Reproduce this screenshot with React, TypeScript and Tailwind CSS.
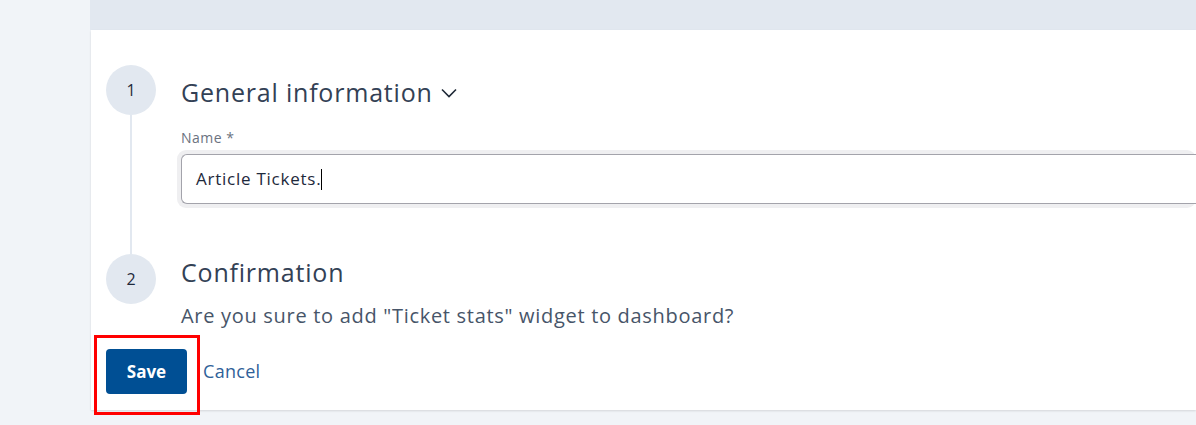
export default function App() {
  return (
    <div className="flex h-[425px] w-[1196px] overflow-hidden bg-[#f1f4f8] font-['Open_Sans',sans-serif] text-[#334155]">
      <div className="w-[90px] shrink-0 bg-[#f1f4f8]" />

      <div className="flex flex-1 flex-col">
        <div className="h-[30px] bg-[#e2e8f0]" />

        <div className="ml-px h-[380px] bg-white pl-[15px] pt-[35px] shadow-[0_1px_2px_rgba(0,0,0,0.12)]">
          {/* step 1 */}
          <div className="flex h-[189px]">
            <div className="flex w-[50px] shrink-0 flex-col items-center">
              <div className="flex h-[50px] w-[50px] items-center justify-center rounded-full bg-[#e2e8f0] text-[16px] text-[#1e293b]">
                1
              </div>
              <div className="w-[2px] flex-1 bg-[#e2e8f0]" />
            </div>
            <div className="flex flex-1 flex-col pl-[25px]">
              <div className="flex h-[54px] items-center gap-[8px]">
                <span className="text-[25px] leading-none tracking-[0.8px]">General information</span>
                <svg width="16" height="10" viewBox="0 0 16 10" fill="none" className="mt-[2px] text-[#1f2937]">
                  <path d="M1 1.5 8 8.5 15 1.5" stroke="currentColor" strokeWidth="1.6" />
                </svg>
              </div>
              <label className="mt-[10px] text-[14px] leading-[18px] tracking-[0.5px] text-[#6b7280]">Name *</label>
              <div className="-ml-[4px] mt-[3px] rounded-[9px] bg-[#efeff1] p-[4px] pr-0">
                <div className="flex h-[50px] items-center rounded-l-[6px] border border-r-0 border-[#a3a3ab] bg-white pl-[14px] text-[17px] tracking-[0.75px] text-[#1e293b]">
                  Article Tickets.
                  <span className="h-[21px] w-px bg-black" />
                </div>
              </div>
            </div>
          </div>

          {/* step 2 */}
          <div className="flex">
            <div className="w-[50px] shrink-0">
              <div className="flex h-[50px] w-[50px] items-center justify-center rounded-full bg-[#e2e8f0] text-[16px] text-[#1e293b]">
                2
              </div>
            </div>
            <div className="flex flex-1 flex-col pl-[25px]">
              <div className="h-[36px] text-[25px] leading-[36px] tracking-[0.8px]">Confirmation</div>
              <div className="mt-[13px] text-[20px] leading-[26px] tracking-[0.7px] text-[#475569]">
                Are you sure to add "Ticket stats" widget to dashboard?
              </div>
            </div>
          </div>

          {/* actions */}
          <div className="mt-[20px] flex items-center">
            <div className="relative">
              <button className="h-[45px] w-[81px] rounded-[4px] bg-[#004f94] text-[17px] font-bold text-white">
                Save
              </button>
              <div className="pointer-events-none absolute -left-[12px] -right-[13px] -top-[14px] -bottom-[21px] border-[3px] border-[#ff0000]" />
            </div>
            <span className="ml-[16px] text-[18px] tracking-[0.3px] text-[#2f6199]">Cancel</span>
          </div>
        </div>
      </div>
    </div>
  )
}
